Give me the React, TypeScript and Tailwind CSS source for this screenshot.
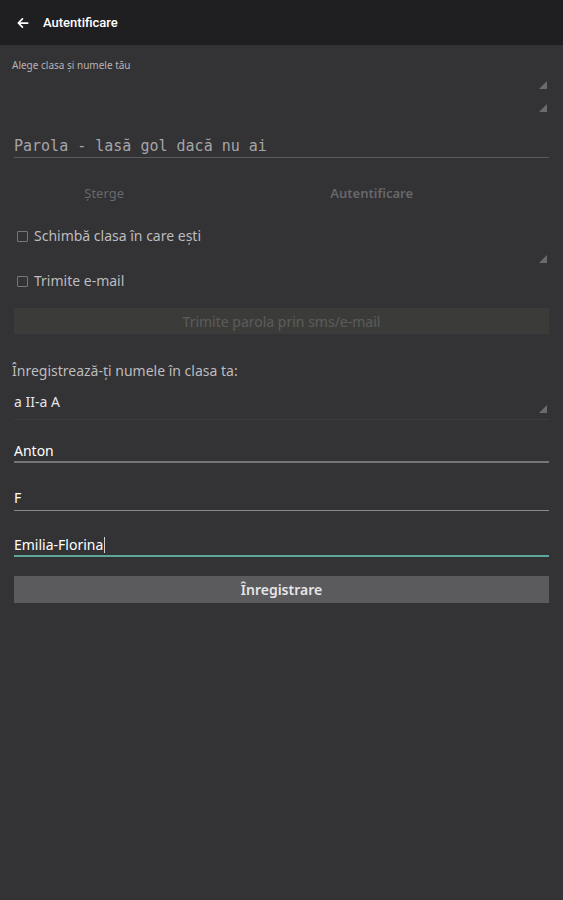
import React from "react";

function Tri() {
  return (
    <svg width="8" height="8" viewBox="0 0 8 8" className="block">
      <polygon points="8,0 8,8 0,8" fill="#6b6a6d" />
    </svg>
  );
}

function Check() {
  return <span className="inline-block w-[11px] h-[11px] border border-[#77767a] rounded-[1px] mr-[6px]" />;
}

export default function App() {
  return (
    <div className="w-[563px] h-[900px] bg-[#333235] text-[#c9c8cb] overflow-hidden" style={{ fontFamily: "'Noto Sans', Roboto, sans-serif" }}>
      <div className="h-[45px] bg-[#1f1e20] flex items-center pl-[16px]" style={{ fontFamily: "Roboto, sans-serif" }}>
        <svg width="14" height="14" viewBox="0 0 24 24" fill="none" stroke="#ffffff" strokeWidth="3" strokeLinecap="round" strokeLinejoin="round">
          <path d="M20 12H5" />
          <path d="M11 5l-7 7 7 7" />
        </svg>
        <span className="ml-[13px] text-[13px] font-medium text-white">Autentificare</span>
      </div>

      <div className="px-[14px]">
        <div className="pt-[13px] -ml-[2px] text-[10px] text-[#b5b4b7] leading-[14px]">Alege clasa și numele tău</div>
        <div className="flex justify-end pt-[9px] pr-[2px]"><Tri /></div>
        <div className="flex justify-end pt-[15px] pr-[2px]"><Tri /></div>

        <div className="mt-[22px] border-b border-[#5a595c] leading-[22px]">
          <span className="text-[15px] text-[#a5a4a7]" style={{ fontFamily: "'DejaVu Sans Mono', monospace" }}>Parola - lasă gol dacă nu ai</span>
        </div>

        <div className="flex mt-[27px] text-[13px] text-[#68676a] leading-[16px]">
          <div className="w-[182px] flex justify-center">Șterge</div>
          <div className="w-[358px] flex justify-center font-semibold">Autentificare</div>
        </div>

        <div className="flex items-center mt-[26px] ml-[3px] text-[14px] text-[#bdbcbf] leading-[18px]">
          <Check />Schimbă clasa în care ești
        </div>
        <div className="flex justify-end pt-[10px] pr-[2px]"><Tri /></div>
        <div className="flex items-center mt-[9px] ml-[3px] text-[14px] text-[#bdbcbf] leading-[18px]">
          <Check />Trimite e-mail
        </div>

        <div className="mt-[18px] h-[26px] bg-[#3b3c3a] flex items-center justify-center text-[14px] text-[#5b5c5a]">
          Trimite parola prin sms/e-mail
        </div>

        <div className="mt-[28px] -ml-[2px] text-[14px] text-[#bdbcbf] leading-[18px]">Înregistrează-ți numele în clasa ta:</div>

        <div className="mt-[13px] border-b border-[#3c3b3e] pb-[8px] flex items-end justify-between">
          <span className="text-[14px] text-[#e6e5e8] leading-[18px]">a II-a A</span>
          <span className="pr-[2px] mb-[-2px]"><Tri /></span>
        </div>

        <div className="mt-[22px] border-b-2 border-[#767579] pb-[1px] text-[14px] text-white leading-[18px]">Anton</div>
        <div className="mt-[26px] border-b border-[#8a898c] pb-[3px] text-[14px] text-white leading-[18px]">F</div>
        <div className="mt-[25px] border-b-2 border-[#5fa69f] pb-[1px] text-[14px] text-white leading-[18px] flex items-center">
          Emilia-Florina<span className="inline-block w-[1px] h-[16px] bg-[#d0d0d0] ml-[1px]" />
        </div>

        <div className="mt-[19px] h-[27px] bg-[#5b5a5d] flex items-center justify-center text-[14px] font-semibold text-[#e6e5e8]">
          Înregistrare
        </div>
      </div>
    </div>
  );
}
